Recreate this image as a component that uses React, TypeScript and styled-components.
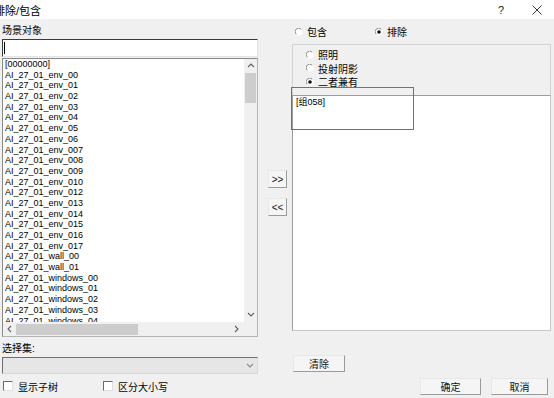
import React from 'react';
import styled, { createGlobalStyle } from 'styled-components';

const GlobalStyle = createGlobalStyle`
  html, body {
    margin: 0;
    padding: 0;
    background: #f0f0f0;
  }
  body {
    font-family: "Liberation Sans", "Noto Sans CJK SC", sans-serif;
    color: #000;
  }
`;

const Dialog = styled.div`
  width: 554px;
  height: 398px;
  display: flex;
  flex-direction: column;
  background: #f0f0f0;
  overflow: hidden;
`;

const TitleBar = styled.div`
  height: 19px;
  flex-shrink: 0;
  background: #fff;
  display: flex;
  align-items: center;
`;

const Title = styled.span`
  flex: 1;
  font-size: 11px;
  margin-left: -6px;
  white-space: nowrap;
`;

const TitleButton = styled.span<{ $w: number }>`
  width: ${p => p.$w}px;
  height: 19px;
  display: flex;
  align-items: center;
  justify-content: center;
  font-size: 11px;
  color: #222;
`;

const Main = styled.div`
  height: 355px;
  display: flex;
  flex-shrink: 0;
`;

const LeftCol = styled.div`
  width: 256px;
  margin-left: 2px;
  display: flex;
  flex-direction: column;
`;

const MiddleCol = styled.div`
  width: 34px;
  display: flex;
  flex-direction: column;
  align-items: flex-start;
  padding-top: 151px;
  padding-left: 10px;
  box-sizing: border-box;
  gap: 10px;
`;

const RightCol = styled.div`
  width: 259px;
  display: flex;
  flex-direction: column;
  position: relative;
`;

const FieldLabel = styled.div`
  height: 20px;
  display: flex;
  align-items: center;
  padding-top: 1px;
  box-sizing: border-box;
  font-size: 10px;
`;

const SearchInput = styled.div`
  height: 18px;
  box-sizing: border-box;
  background: #fff;
  border: 1px solid;
  border-color: #3a3a3a #e3e3e3 #e3e3e3 #3a3a3a;
  display: flex;
  align-items: center;
  padding-left: 1px;
`;

const Caret = styled.span`
  width: 1px;
  height: 12px;
  background: #000;
`;

const ListBox = styled.div`
  margin-top: 1px;
  height: 279px;
  box-sizing: border-box;
  border: 1px solid;
  border-color: #8a8a8a #b4b4b4 #b4b4b4 #8a8a8a;
  background: #fff;
  display: grid;
  grid-template-columns: 1fr 13px;
  grid-template-rows: 1fr 14px;
`;

const Items = styled.div`
  overflow: hidden;
  padding-left: 2px;
`;

const Item = styled.div`
  font-size: 9px;
  line-height: 10.7px;
  height: 10.7px;
  white-space: nowrap;
  color: #000;
`;

const VScroll = styled.div`
  background: #f0f0f0;
  display: flex;
  flex-direction: column;
`;

const HScroll = styled.div`
  background: #f0f0f0;
  display: flex;
  align-items: center;
`;

const ArrowCell = styled.div<{ $w: number; $h: number }>`
  width: ${p => p.$w}px;
  height: ${p => p.$h}px;
  flex-shrink: 0;
  display: flex;
  align-items: center;
  justify-content: center;
`;

const VThumb = styled.div`
  width: 11px;
  height: 30px;
  margin-left: 1px;
  background: #cdcdcd;
`;

const HThumb = styled.div`
  width: 122px;
  height: 11px;
  background: #cdcdcd;
`;

const Spacer = styled.div`
  flex: 1;
`;

const Corner = styled.div`
  background: #f0f0f0;
`;

const Combo = styled.div`
  height: 17px;
  box-sizing: border-box;
  border: 1px solid;
  border-color: #6e6e6e #d8d8d8 #d8d8d8 #6e6e6e;
  background: #e6e6e6;
  display: flex;
  align-items: center;
  justify-content: flex-end;
  padding-right: 3px;
`;

const Button = styled.div<{ $w: number; $h?: number }>`
  width: ${p => p.$w}px;
  height: ${p => p.$h ?? 17}px;
  box-sizing: border-box;
  border: 1px solid;
  border-color: #e8e8e8 #9a9a9a #9a9a9a #e8e8e8;
  background: #f5f5f5;
  display: flex;
  align-items: center;
  justify-content: center;
  font-size: 10px;
  color: #111;
  flex-shrink: 0;
`;

const RadioRow = styled.div`
  height: 25px;
  display: flex;
  align-items: center;
  padding-left: 3px;
`;

const RadioItem = styled.label<{ $w?: number }>`
  display: flex;
  align-items: center;
  gap: 4px;
  font-size: 10px;
  ${p => (p.$w ? `width: ${p.$w}px;` : '')}
`;

const GroupBox = styled.div`
  height: 51px;
  box-sizing: border-box;
  border: 1px solid #d2d2d2;
  border-bottom: none;
  padding: 3px 0 0 13px;
  display: flex;
  flex-direction: column;
`;

const GroupRow = styled.div`
  height: 13.5px;
  display: flex;
  align-items: center;
`;

const TextArea = styled.div`
  height: 236px;
  box-sizing: border-box;
  border: 1px solid;
  border-color: #9c9c9c #c8c8c8 #c8c8c8 #9c9c9c;
  background: #fff;
  padding: 1px 3px;
  font-size: 9px;
  line-height: 10px;
`;

const ClearButtonRow = styled.div`
  margin-top: 24px;
  padding-left: 1px;
`;

const Annotation = styled.div`
  position: absolute;
  left: -1px;
  top: 68px;
  width: 123px;
  height: 43px;
  box-sizing: border-box;
  border-style: solid;
  border-width: 1px;
  border-color: #ee3b44;
  background: transparent;
  pointer-events: none;
`;

const Footer = styled.div`
  flex: 1;
  display: flex;
  align-items: center;
  padding: 0 6px 0 3px;
`;

const CheckItem = styled.label<{ $w?: number }>`
  display: flex;
  align-items: center;
  gap: 5px;
  font-size: 10px;
  ${p => (p.$w ? `width: ${p.$w}px;` : '')}
`;

const CheckBox = styled.span`
  width: 8px;
  height: 8px;
  background: #fff;
  border: 1px solid;
  border-color: #6a6a6a #e0e0e0 #e0e0e0 #6a6a6a;
`;

const ButtonGroup = styled.div`
  margin-left: auto;
  display: flex;
  gap: 10px;
`;

const Radio: React.FC<{ checked?: boolean }> = ({ checked }) => (
  <svg width="8" height="8" viewBox="0 0 8 8">
    <circle cx="4" cy="4" r="3.5" fill="#fff" />
    <path d="M1.2 6.2 A3.4 3.4 0 0 1 6.2 1.2" fill="none" stroke="#8a8a8a" strokeWidth="1" />
    {checked && <circle cx="4" cy="4" r="1.8" fill="#111" />}
  </svg>
);

type Dir = 'up' | 'down' | 'left' | 'right';

const Chevron: React.FC<{ dir: Dir; color?: string }> = ({ dir, color = '#606060' }) => {
  const d = {
    up: 'M1 5 L4 2 L7 5',
    down: 'M1 2 L4 5 L7 2',
    left: 'M5 1 L2 4 L5 7',
    right: 'M2 1 L5 4 L2 7',
  }[dir];
  return (
    <svg width="8" height="8" viewBox="0 0 8 8">
      <path d={d} fill="none" stroke={color} strokeWidth="1.1" />
    </svg>
  );
};

const CloseIcon = () => (
  <svg width="10" height="10" viewBox="0 0 10 10">
    <path d="M0.5 0.5 L9.5 9.5 M9.5 0.5 L0.5 9.5" stroke="#222" strokeWidth="0.9" />
  </svg>
);

const sceneObjects = [
  '[00000000]',
  'AI_27_01_env_00',
  'AI_27_01_env_01',
  'AI_27_01_env_02',
  'AI_27_01_env_03',
  'AI_27_01_env_04',
  'AI_27_01_env_05',
  'AI_27_01_env_06',
  'AI_27_01_env_007',
  'AI_27_01_env_008',
  'AI_27_01_env_009',
  'AI_27_01_env_010',
  'AI_27_01_env_012',
  'AI_27_01_env_013',
  'AI_27_01_env_014',
  'AI_27_01_env_015',
  'AI_27_01_env_016',
  'AI_27_01_env_017',
  'AI_27_01_wall_00',
  'AI_27_01_wall_01',
  'AI_27_01_windows_00',
  'AI_27_01_windows_01',
  'AI_27_01_windows_02',
  'AI_27_01_windows_03',
  'AI_27_01_windows_04',
  'AI_27_01_windows_05',
];

const App: React.FC = () => {
  return (
    <>
      <GlobalStyle />
      <Dialog>
        <TitleBar>
          <Title>排除/包含</Title>
          <TitleButton $w={38}>?</TitleButton>
          <TitleButton $w={34}>
            <CloseIcon />
          </TitleButton>
        </TitleBar>

        <Main>
          <LeftCol>
            <FieldLabel>场景对象</FieldLabel>
            <SearchInput>
              <Caret />
            </SearchInput>
            <ListBox>
              <Items>
                {sceneObjects.map(name => (
                  <Item key={name}>{name}</Item>
                ))}
              </Items>
              <VScroll>
                <ArrowCell $w={13} $h={14}>
                  <Chevron dir="up" />
                </ArrowCell>
                <VThumb />
                <Spacer />
                <ArrowCell $w={13} $h={14}>
                  <Chevron dir="down" />
                </ArrowCell>
              </VScroll>
              <HScroll>
                <ArrowCell $w={13} $h={14}>
                  <Chevron dir="left" />
                </ArrowCell>
                <HThumb />
                <Spacer />
                <ArrowCell $w={14} $h={14}>
                  <Chevron dir="right" />
                </ArrowCell>
              </HScroll>
              <Corner />
            </ListBox>
            <FieldLabel>选择集:</FieldLabel>
            <Combo>
              <Chevron dir="down" color="#8a8a8a" />
            </Combo>
          </LeftCol>

          <MiddleCol>
            <Button $w={19} $h={18}>&gt;&gt;</Button>
            <Button $w={19} $h={18}>&lt;&lt;</Button>
          </MiddleCol>

          <RightCol>
            <RadioRow>
              <RadioItem $w={80}>
                <Radio />
                包含
              </RadioItem>
              <RadioItem>
                <Radio checked />
                排除
              </RadioItem>
            </RadioRow>
            <GroupBox>
              <GroupRow>
                <RadioItem>
                  <Radio />
                  照明
                </RadioItem>
              </GroupRow>
              <GroupRow>
                <RadioItem>
                  <Radio />
                  投射阴影
                </RadioItem>
              </GroupRow>
              <GroupRow>
                <RadioItem>
                  <Radio checked />
                  二者兼有
                </RadioItem>
              </GroupRow>
            </GroupBox>
            <TextArea>[组058]</TextArea>
            <ClearButtonRow>
              <Button $w={52}>清除</Button>
            </ClearButtonRow>
            <Annotation />
          </RightCol>
        </Main>

        <Footer>
          <CheckItem $w={100}>
            <CheckBox />
            显示子树
          </CheckItem>
          <CheckItem>
            <CheckBox />
            区分大小写
          </CheckItem>
          <ButtonGroup>
            <Button $w={61}>确定</Button>
            <Button $w={57}>取消</Button>
          </ButtonGroup>
        </Footer>
      </Dialog>
    </>
  );
};

export default App;
